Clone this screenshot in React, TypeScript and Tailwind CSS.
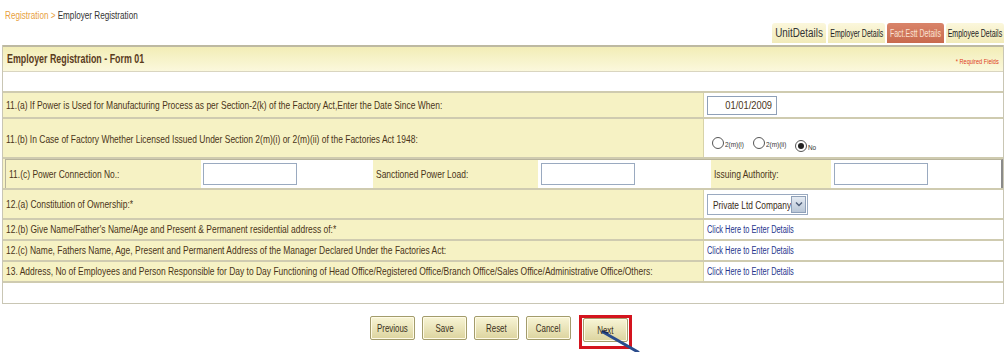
import React from 'react';

const FONT = { fontFamily: '"Liberation Sans Narrow", "Liberation Sans", Arial, sans-serif' };

const LINK_ROWS = [
  '12.(b) Give Name/Father\'s Name/Age and Present & Permanent residential address of:*',
  '12.(c) Name, Fathers Name, Age, Present and Permanent Address of the Manager Declared Under the Factories Act:',
  '13. Address, No of Employees and Person Responsible for Day to Day Functioning of Head Office/Registered Office/Branch Office/Sales Office/Administrative Office/Others:',
];

const TABS = [
  { label: 'UnitDetails', w: 'w-[54px]', big: true },
  { label: 'Employer Details', w: 'w-[57px]' },
  { label: 'Fact.Estt Details', w: 'w-[57px]', active: true },
  { label: 'Employee Details', w: 'w-[58px]' },
];

// the source page uses a condensed face; squeeze Liberation Sans to match
function Label({ children }: { children: React.ReactNode }) {
  return <span className="inline-block whitespace-nowrap origin-left scale-x-[0.77] text-[11px]">{children}</span>;
}

function Radio({ checked, label }: { checked?: boolean; label: string }) {
  return (
    <span className="inline-flex items-end mr-[4px]">
      <span className="w-[12px] h-[12px] rounded-full border border-[#555] bg-white flex items-center justify-center">
        {checked && <span className="w-[6px] h-[6px] rounded-full bg-[#222]" />}
      </span>
      <span className="inline-block whitespace-nowrap origin-left scale-x-[0.8] text-[8px] leading-none text-[#333] ml-[1px]">{label}</span>
    </span>
  );
}

function Btn({ label }: { label: string }) {
  return (
    <button className="h-[24px] w-[45px] flex items-center justify-center border border-[#a39c6c] rounded-[2px] bg-gradient-to-b from-[#f8f5d6] to-[#dcd49e] text-[#3a3020] shadow-[inset_0_0_0_1px_#fffbe6]">
      <span className="inline-block whitespace-nowrap scale-x-[0.72] text-[11px]">{label}</span>
    </button>
  );
}

export default function App() {
  return (
    <div className="w-[1006px] h-[352px] bg-white relative overflow-hidden text-[#4a3418]" style={FONT}>
      {/* Breadcrumb */}
      <div className="h-[20px] pl-[5px] pt-[2px]">
        <span className="inline-block whitespace-nowrap origin-left scale-x-[0.74] text-[11px]">
          <span className="text-[#e8a040]">Registration</span>
          <span className="text-[#e8a040] mx-[3px]">&gt;</span>
          <span className="text-[#333]">Employer Registration</span>
        </span>
      </div>

      {/* Tabs */}
      <div className="flex justify-end gap-[2px] pr-[2px] h-[22px] mt-[3px]">
        {TABS.map((t) => (
          <div
            key={t.label}
            className={`${t.w} h-[20px] flex items-center justify-center rounded-t-[3px] ${
              t.active
                ? 'bg-gradient-to-b from-[#d9846a] to-[#c86a4e] text-[#fbe2d4]'
                : t.big
                ? 'bg-gradient-to-b from-[#fbf7dc] to-[#f1eab8] text-[#333]'
                : 'bg-gradient-to-b from-[#fbf7dc] to-[#f1eab8] text-[#222]'
            }`}
          >
            {t.big ? (
              <span className="inline-block whitespace-nowrap scale-x-[0.82] text-[12px]">{t.label}</span>
            ) : (
              <span className="inline-block whitespace-nowrap scale-x-[0.7] text-[10px]">{t.label}</span>
            )}
          </div>
        ))}
      </div>

      {/* Form box */}
      <div className="mx-[2px] border-x border-b border-[#c9c6b4]">
        <div className="h-[26px] flex items-center justify-between px-[4px] border-t-2 border-[#bdb9a2] bg-gradient-to-b from-[#f2edb6] to-[#fbf8dc]">
          <span className="inline-block whitespace-nowrap origin-left scale-x-[0.74] font-bold text-[12px] text-[#5a3b1c]">
            Employer Registration - Form 01
          </span>
          <span className="inline-block whitespace-nowrap origin-right scale-x-[0.8] text-[7px] text-[#e03a1a] mt-[6px]">
            * Required Fields
          </span>
        </div>
        <div className="h-[20px] border-t border-[#d9d5c0]" />

        {/* 11(a) */}
        <div className="flex h-[26px] border-t-2 border-[#cfcbb0]">
          <div className="w-[701px] bg-[#f6f2c4] flex items-center pl-[3px] border-r border-[#d8d3a8]">
            <Label>11.(a) If Power is Used for Manufacturing Process as per Section-2(k) of the Factory Act,Enter the Date Since When:</Label>
          </div>
          <div className="flex-1 flex items-center pl-[3px]">
            <div className="w-[70px] h-[19px] border border-[#8fa0b8] flex items-center justify-end pr-[4px]">
              <span className="inline-block whitespace-nowrap origin-right scale-x-[0.85] text-[11px]">01/01/2009</span>
            </div>
          </div>
        </div>

        {/* 11(b) */}
        <div className="flex h-[40px] border-t-2 border-[#cfcbb0]">
          <div className="w-[701px] bg-[#f6f2c4] pl-[3px] pt-[7px] border-r border-[#d8d3a8]">
            <Label>11.(b) In Case of Factory Whether Licensed Issued Under Section 2(m)(i) or 2(m)(ii) of the Factories Act 1948:</Label>
          </div>
          <div className="flex-1 pl-[8px] pt-[13px]">
            <Radio label="2(m)(i)" />
            <Radio label="2(m)(ii)" />
            <Radio checked label="No" />
          </div>
        </div>

        {/* 11(c) */}
        <div className="border-t-2 border-[#cfcbb0] bg-[#f6f2c4] pl-[2px]">
          <div className="flex h-[29px] border-l border-r-2 border-t border-[#b8b49c] border-r-[#8a8a8a]">
            <div className="w-[195px] bg-[#f6f2c4] flex items-center pl-[3px]">
              <Label>11.(c) Power Connection No.:</Label>
            </div>
            <div className="w-[172px] bg-white flex items-center pl-[2px]">
              <div className="w-[94px] h-[22px] border border-[#9aaac0]" />
            </div>
            <div className="w-[165px] bg-[#f6f2c4] flex items-center pl-[3px]">
              <Label>Sanctioned Power Load:</Label>
            </div>
            <div className="w-[173px] bg-white flex items-center pl-[3px]">
              <div className="w-[94px] h-[22px] border border-[#9aaac0]" />
            </div>
            <div className="w-[120px] bg-[#f6f2c4] flex items-center pl-[3px]">
              <Label>Issuing Authority:</Label>
            </div>
            <div className="flex-1 bg-white flex items-center pl-[3px]">
              <div className="w-[94px] h-[22px] border border-[#9aaac0]" />
            </div>
          </div>
        </div>

        {/* 12(a) */}
        <div className="flex h-[30px] border-t-2 border-[#cfcbb0]">
          <div className="w-[701px] bg-[#f6f2c4] flex items-center pl-[3px] border-r border-[#d8d3a8]">
            <Label>12.(a) Constitution of Ownership:*</Label>
          </div>
          <div className="flex-1 flex items-center pl-[3px]">
            <div className="w-[101px] h-[21px] border border-[#9aaac0] flex items-center">
              <span className="flex-1 pl-[5px] overflow-hidden">
                <span className="inline-block whitespace-nowrap origin-left scale-x-[0.76] text-[11px] text-[#3a2a18]">Private Ltd Company</span>
              </span>
              <span className="w-[15px] h-[17px] mr-[1px] bg-gradient-to-b from-[#e4eaf2] to-[#b9c6d6] border border-[#8fa0b8] flex items-center justify-center">
                <svg width="8" height="6" viewBox="0 0 8 6">
                  <path d="M1 1.5 L4 4.5 L7 1.5" fill="none" stroke="#4d5d78" strokeWidth="1.4" />
                </svg>
              </span>
            </div>
          </div>
        </div>

        {LINK_ROWS.map((t, i) => (
          <div key={i} className="flex h-[21px] border-t-2 border-[#cfcbb0]">
            <div className="w-[701px] bg-[#f6f2c4] flex items-center pl-[3px] border-r border-[#d8d3a8]">
              <Label>{t}</Label>
            </div>
            <div className="flex-1 flex items-center pl-[3px] text-[#26348c]">
              <span className="inline-block whitespace-nowrap origin-left scale-x-[0.74] text-[10px]">Click Here to Enter Details</span>
            </div>
          </div>
        ))}

        <div className="h-[22px] border-t-2 border-[#cfcbb0]" />
      </div>

      {/* Buttons */}
      <div className="flex justify-center items-start gap-[7px] mt-[12px] pr-[4px]">
        <Btn label="Previous" />
        <Btn label="Save" />
        <Btn label="Reset" />
        <Btn label="Cancel" />
        <div className="border-[3px] border-[#d4141e] px-[1px] pb-[4px] -mt-[1px] ml-[1px]">
          <Btn label="Next" />
        </div>
      </div>

      {/* Pen cursor annotation */}
      <svg className="absolute left-[600px] top-[328px]" width="42" height="24" viewBox="0 0 42 24">
        <path d="M3 4 L38 24" stroke="#2a4c8c" strokeWidth="3" strokeLinecap="round" />
        <path d="M2 3 L8 5" stroke="#1a2a5a" strokeWidth="1.5" />
      </svg>
    </div>
  );
}
